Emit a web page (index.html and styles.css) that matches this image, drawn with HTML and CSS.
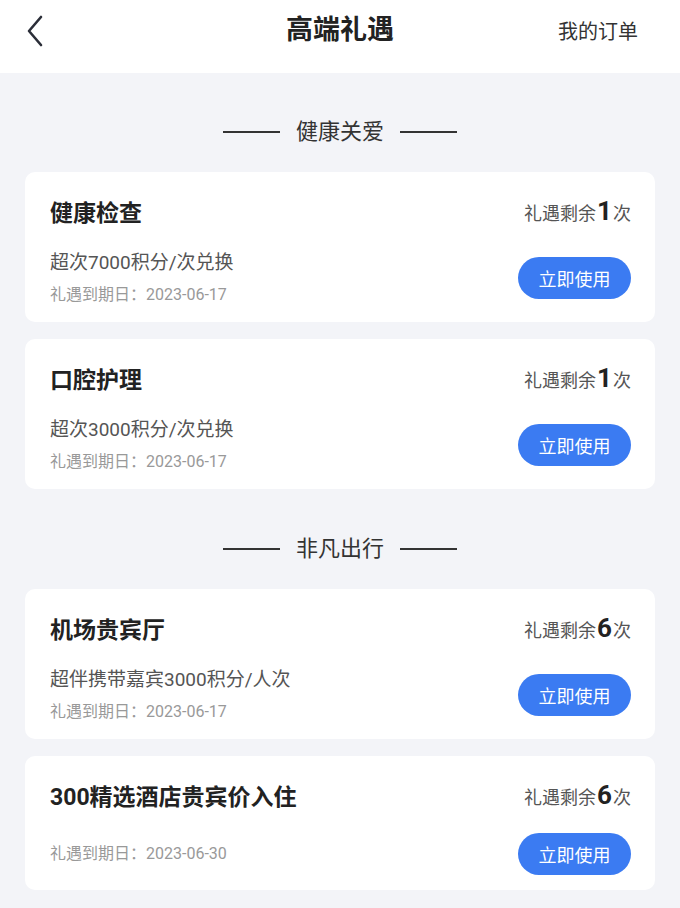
FILE: index.html
```html
<!DOCTYPE html>
<html lang="zh-CN">
<head>
    <meta charset="UTF-8">
    <meta name="viewport" content="width=device-width, initial-scale=1.0">
    <title>高端礼遇</title>
    <link rel="stylesheet" href="styles.css">
</head>
<body>
    <header class="nav-bar">
        <span class="back-btn">
            <svg width="18" height="32" viewBox="0 0 18 32">
                <polyline points="15,2 3,16 15,30" fill="none" stroke="#2b2e38" stroke-width="2.6" stroke-linecap="round" stroke-linejoin="round"/>
            </svg>
        </span>
        <h1 class="nav-title">高端礼遇</h1>
        <span class="nav-link">我的订单</span>
    </header>

    <main class="content">
        <div class="section-title"><span class="line"></span>健康关爱<span class="line"></span></div>

        <div class="card">
            <div class="card-top">
                <div class="card-name">健康检查</div>
                <div class="remain">礼遇剩余<b>1</b>次</div>
            </div>
            <div class="card-bottom">
                <div class="card-info">
                    <div class="card-desc">超次7000积分/次兑换</div>
                    <div class="card-date">礼遇到期日：2023-06-17</div>
                </div>
                <button class="use-btn">立即使用</button>
            </div>
        </div>

        <div class="card">
            <div class="card-top">
                <div class="card-name">口腔护理</div>
                <div class="remain">礼遇剩余<b>1</b>次</div>
            </div>
            <div class="card-bottom">
                <div class="card-info">
                    <div class="card-desc">超次3000积分/次兑换</div>
                    <div class="card-date">礼遇到期日：2023-06-17</div>
                </div>
                <button class="use-btn">立即使用</button>
            </div>
        </div>

        <div class="section-title"><span class="line"></span>非凡出行<span class="line"></span></div>

        <div class="card">
            <div class="card-top">
                <div class="card-name">机场贵宾厅</div>
                <div class="remain">礼遇剩余<b>6</b>次</div>
            </div>
            <div class="card-bottom">
                <div class="card-info">
                    <div class="card-desc">超伴携带嘉宾3000积分/人次</div>
                    <div class="card-date">礼遇到期日：2023-06-17</div>
                </div>
                <button class="use-btn">立即使用</button>
            </div>
        </div>

        <div class="card">
            <div class="card-top">
                <div class="card-name">300精选酒店贵宾价入住</div>
                <div class="remain">礼遇剩余<b>6</b>次</div>
            </div>
            <div class="card-bottom">
                <div class="card-info">
                    <div class="card-date">礼遇到期日：2023-06-30</div>
                </div>
                <button class="use-btn">立即使用</button>
            </div>
        </div>
    </main>
</body>
</html>
```

FILE: styles.css
```css
* {
    margin: 0;
    padding: 0;
    box-sizing: border-box;
}

body {
    font-family: Roboto, "Noto Sans CJK SC", sans-serif;
    background: #f3f4f8;
    color: #333;
}

.nav-bar {
    height: 73px;
    background: white;
    display: flex;
    align-items: center;
    justify-content: space-between;
    padding: 0 42px 12px 26px;
    position: relative;
}

.back-btn {
    display: flex;
    width: 18px;
}

.nav-title {
    position: absolute;
    left: 0;
    right: 0;
    top: 10px;
    text-align: center;
    font-size: 27px;
    line-height: 40px;
    font-weight: 700;
    color: #222;
    pointer-events: none;
}

.nav-link {
    font-size: 20px;
    color: #333;
}

.content {
    padding: 0 25px 20px;
}

.section-title {
    display: flex;
    align-items: center;
    justify-content: center;
    gap: 16px;
    font-size: 22px;
    line-height: 32px;
    color: #333;
    padding: 43px 0 24px;
}

.card + .section-title {
    padding-top: 27px;
}

.section-title .line {
    width: 57px;
    height: 2px;
    background: #333;
}

.card {
    background: white;
    border-radius: 10px;
    padding: 22px 24px 15px 25px;
    margin-bottom: 17px;
}

.card-top {
    display: flex;
    justify-content: space-between;
    align-items: center;
    height: 34px;
}

.card-name {
    font-size: 23px;
    font-weight: 700;
    color: #222;
}

.remain {
    font-size: 18px;
    color: #555;
    display: flex;
    align-items: baseline;
}

.remain b {
    font-size: 26px;
    color: #222;
    line-height: 1;
    margin: 0 1px;
}

.card-bottom {
    display: flex;
    justify-content: space-between;
    align-items: center;
    margin-top: 21px;
    min-height: 42px;
}

.card-info {
    display: flex;
    flex-direction: column;
    gap: 6px;
}

.card-desc {
    font-size: 19px;
    line-height: 28px;
    color: #555;
}

.card-date {
    font-size: 16px;
    line-height: 24px;
    color: #999;
}

.use-btn {
    width: 113px;
    height: 42px;
    border: none;
    border-radius: 21px;
    background: #3b7bf2;
    color: white;
    font-family: inherit;
    font-size: 18px;
}
```
